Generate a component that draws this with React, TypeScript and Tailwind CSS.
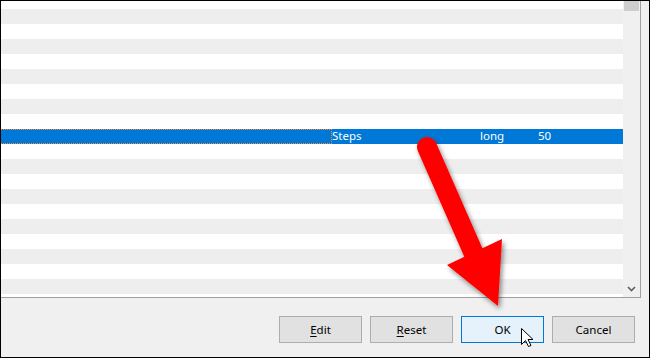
import React from "react";

const ROWS = 20;
const SELECTED = 9;

function Row({ i }: { i: number }) {
  if (i === SELECTED) {
    return (
      <div className="flex h-[15px] bg-[#0078d7] text-white text-[11.5px] leading-[13px] shrink-0">
        <div className="w-[331px] h-[15px] border-t border-b border-r border-dotted border-[#ff8728] shrink-0" />
        <div className="w-[148px] shrink-0">Steps</div>
        <div className="w-[58px] shrink-0">long</div>
        <div className="shrink-0">50</div>
      </div>
    );
  }
  return <div className={`h-[15px] shrink-0 ${i % 2 === 1 ? "bg-[#eeeeee]" : "bg-white"}`} />;
}

export default function App() {
  const rows = Array.from({ length: ROWS }, (_, i) => i);
  return (
    <div className="relative w-[650px] h-[358px] border border-black bg-[#f0f0f0] flex flex-col overflow-hidden font-['Noto_Sans',sans-serif] text-black">
      <div className="flex h-[297px] mr-[8px] border-r border-b border-[#a0a0a0] bg-white shrink-0">
        <div className="flex-1 overflow-hidden">
          <div className="flex flex-col -mt-[7px]">
            {rows.map((i) => (
              <Row key={i} i={i} />
            ))}
          </div>
        </div>
        <div className="w-[17px] bg-[#f0f0f0] flex flex-col justify-between items-center shrink-0">
          <div className="w-[15px] h-[10px] bg-[#cdcdcd]" />
          <div className="w-[17px] h-[17px] flex items-center justify-center">
            <svg width="9" height="6" viewBox="0 0 9 6">
              <path d="M1 1 L4.5 4.5 L8 1" fill="none" stroke="#606060" strokeWidth="1.6" />
            </svg>
          </div>
        </div>
      </div>
      <div className="flex-1 flex justify-end items-start pt-[18px] pr-[14px] gap-[8px] text-[11.5px]">
        <button className="w-[83px] h-[27px] border border-[#adadad] bg-[#e1e1e1] flex items-center justify-center">
          <span>
            <span className="underline underline-offset-2">E</span>dit
          </span>
        </button>
        <button className="w-[83px] h-[27px] border border-[#adadad] bg-[#e1e1e1] flex items-center justify-center">
          <span>
            <span className="underline underline-offset-2">R</span>eset
          </span>
        </button>
        <button className="w-[83px] h-[27px] border border-[#0078d7] bg-[#e5f1fb] flex items-center justify-center">
          OK
        </button>
        <button className="w-[83px] h-[27px] border border-[#adadad] bg-[#e1e1e1] flex items-center justify-center">
          Cancel
        </button>
      </div>
      <svg
        className="absolute -left-px -top-px pointer-events-none"
        width="650"
        height="358"
        viewBox="0 0 650 358"
      >
        <defs>
          <filter id="sh" x="-20%" y="-20%" width="160%" height="160%">
            <feDropShadow dx="2" dy="3" stdDeviation="2.5" floodColor="#000" floodOpacity="0.45" />
          </filter>
        </defs>
        <g filter="url(#sh)" fill="#ff0000">
          <line x1="427" y1="147" x2="474" y2="254" stroke="#ff0000" strokeWidth="20" strokeLinecap="round" />
          <polygon points="447,265 502,239 498,306" />
        </g>
        <path
          d="M521.5 328.5 L521.5 344.5 L525.5 340.5 L528.5 346.5 L531 345.5 L528 339.5 L533 339.5 Z"
          fill="#fff"
          stroke="#000"
          strokeWidth="1"
          strokeLinejoin="miter"
        />
      </svg>
    </div>
  );
}
